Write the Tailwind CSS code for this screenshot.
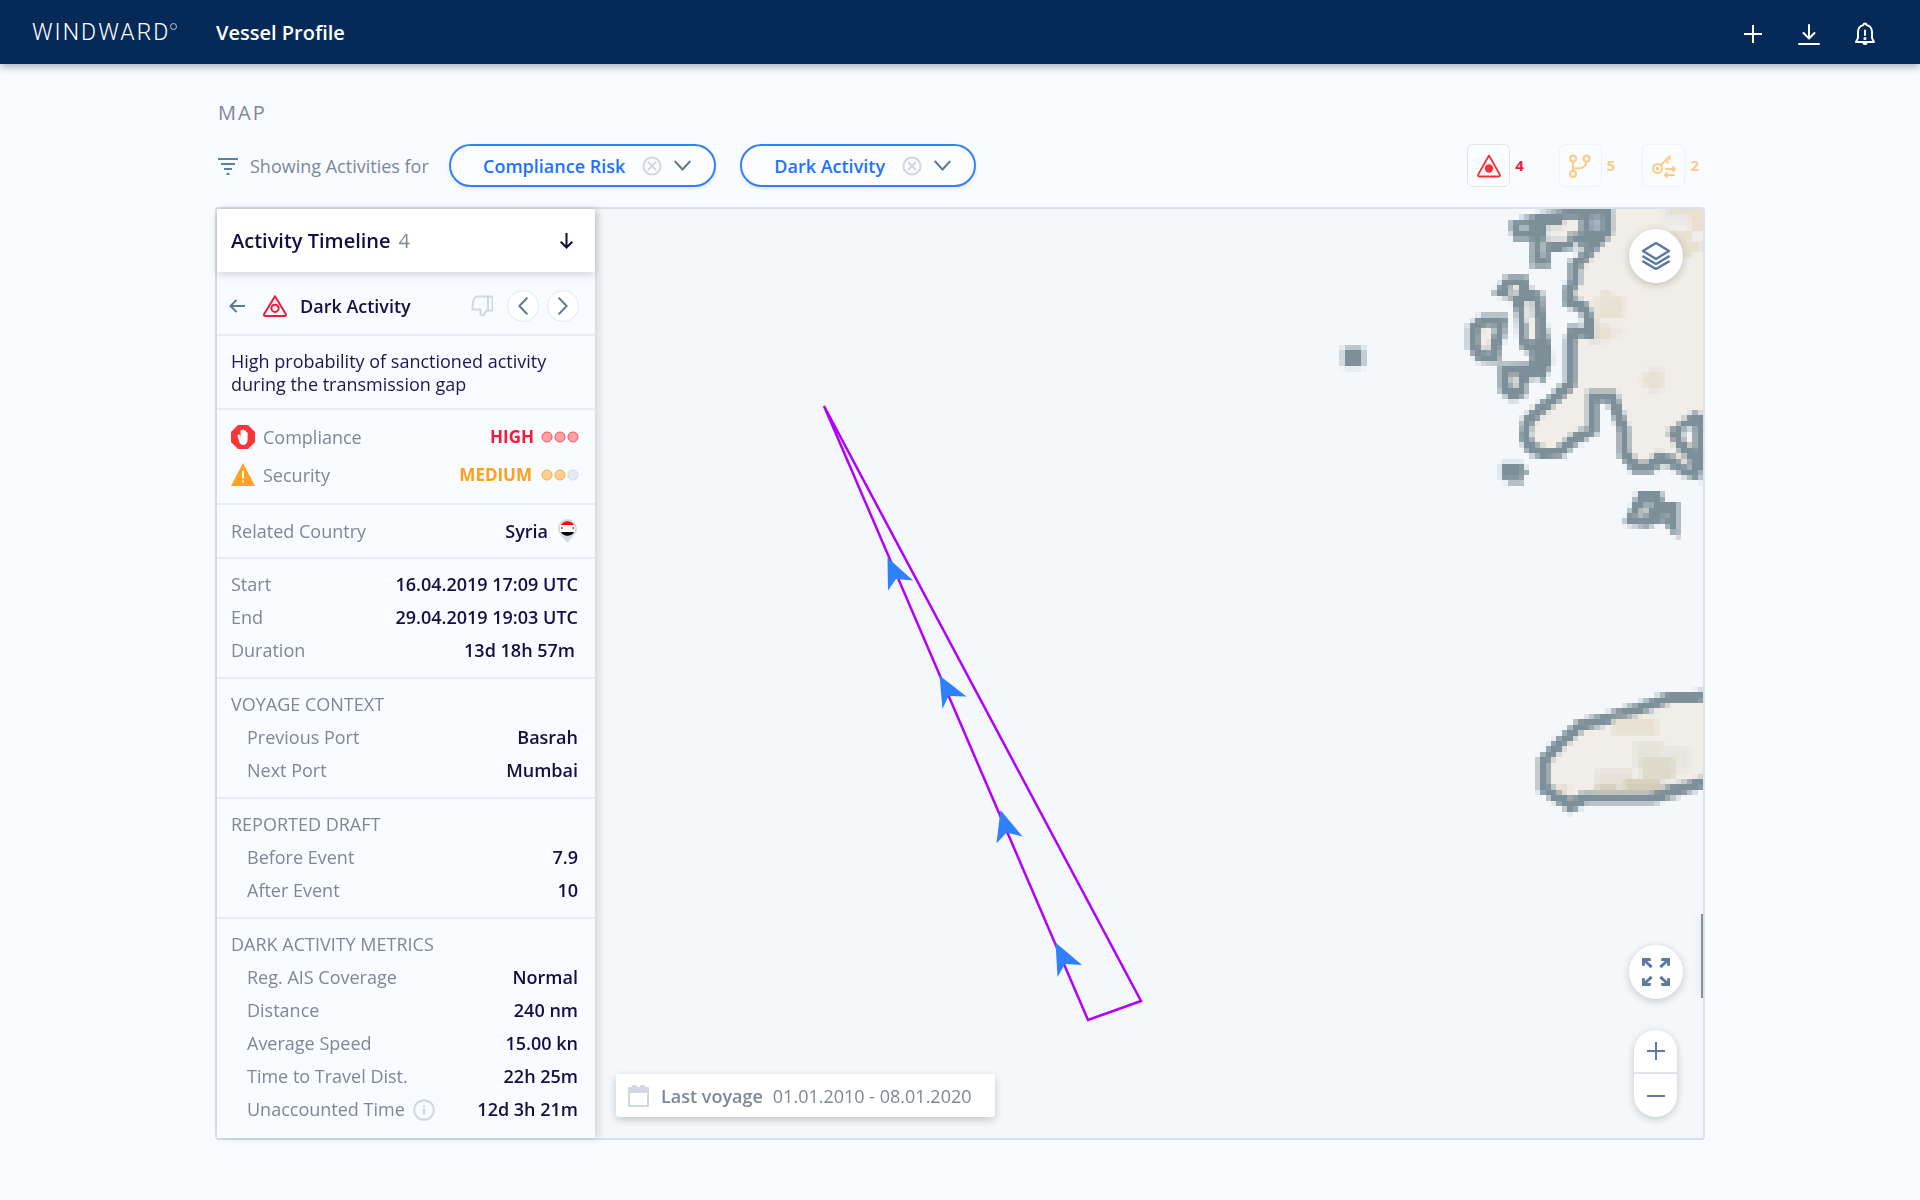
<!DOCTYPE html>
<html lang="en">
<head>
<meta charset="utf-8">
<meta name="viewport" content="width=device-width, initial-scale=1">
<title>Vessel Profile</title>
<script src="https://cdn.jsdelivr.net/npm/@tailwindcss/browser@4"></script>
</head>
<body class="min-h-screen bg-[#f8fbff] font-['Open_Sans','Noto_Sans',sans-serif] text-lg text-[#7e8796]">

<header class="relative flex h-16 items-center bg-[#062a58] pr-[41px] pl-8 text-white shadow-[0_3px_8px_rgba(0,0,0,0.3)]">
  <a href="#" aria-label="Windward home" class="flex w-46 items-start font-['Roboto',sans-serif] text-[23px] leading-none font-light tracking-[2px]">WINDWARD<span class="mt-[2px] size-[7px] rounded-full border border-white/70"></span></a>
  <h1 class="pt-[2px] text-xl font-semibold">Vessel Profile</h1>
  <div class="ml-auto flex items-center gap-7 pt-1">
    <button type="button" aria-label="Add" class="grid size-7 place-items-center">
      <svg class="size-5" viewBox="0 0 20 20" fill="none" stroke="currentColor" stroke-width="2"><path d="M10 1v18M1 10h18"/></svg>
    </button>
    <button type="button" aria-label="Download" class="grid size-7 place-items-center">
      <svg class="size-6" viewBox="0 0 24 24" fill="none" stroke="currentColor" stroke-width="2" stroke-linecap="round" stroke-linejoin="round"><path d="M12 3v13M6.500 11l5.500 5.500 5.500-5.500M2 22h20"/></svg>
    </button>
    <button type="button" aria-label="Alerts" class="grid size-7 place-items-center">
      <svg class="size-6" viewBox="0 0 24 24" fill="none" stroke="currentColor" stroke-width="2" stroke-linejoin="round" stroke-linecap="round"><path d="M12 1.500c-1 0-1.500.8-1.700 1.600C7 4 5 6.500 5 10v5.500c0 1.500-1.500 2.500-2 4.500h18c-.5-2-2-3-2-4.500V10c0-3.500-2-6-5.300-6.900-.2-.8-.7-1.600-1.700-1.600zM10.500 21.500c.5.800 2.500.8 3 0M12 8.500v4.500"/><circle cx="12" cy="16.500" r=".6" fill="currentColor"/></svg>
    </button>
  </div>
</header>

<main class="px-[215px] pt-9 pb-15">
  <h2 class="pl-[3px] text-xl leading-[26px] font-medium tracking-[2px]">MAP</h2>

  <div class="mt-[18px] flex items-center">
    <svg class="ml-[3px] h-5 w-5" viewBox="0 0 20 20" fill="none" stroke="#5d7da3" stroke-width="2"><path d="M0 3h20M3 8h14M6 13h8M8.500 18h3"/></svg>
    <span class="ml-3 w-[199px]">Showing Activities for</span>
    <div class="flex gap-6">
      <button type="button" class="flex h-[43px] items-center rounded-full border-2 border-[#3380fc] bg-[#fbfdff] pr-[23px] pl-8 font-semibold text-[#1d73fb] shadow-[0_2px_4px_rgba(0,0,0,0.08)]">
        Compliance Risk
        <svg class="ml-[17px] size-5" viewBox="0 0 20 20" fill="none" stroke="#cfd8e0" stroke-width="2"><circle cx="10" cy="10" r="8.500"/><path d="M6 6l8 8M14 6l-8 8"/></svg>
        <svg class="ml-3 size-[17px]" viewBox="0 0 17 17" fill="none" stroke="#5b7a98" stroke-width="2"><path d="M.7 4l7.800 8.500L16.300 4"/></svg>
      </button>
      <button type="button" class="flex h-[43px] items-center rounded-full border-2 border-[#3380fc] bg-[#fbfdff] pr-[23px] pl-8 font-semibold text-[#1d73fb] shadow-[0_2px_4px_rgba(0,0,0,0.08)]">
        Dark Activity
        <svg class="ml-[17px] size-5" viewBox="0 0 20 20" fill="none" stroke="#cfd8e0" stroke-width="2"><circle cx="10" cy="10" r="8.500"/><path d="M6 6l8 8M14 6l-8 8"/></svg>
        <svg class="ml-3 size-[17px]" viewBox="0 0 17 17" fill="none" stroke="#5b7a98" stroke-width="2"><path d="M.7 4l7.800 8.500L16.300 4"/></svg>
      </button>
    </div>
    <div class="ml-auto flex items-center gap-[27px] pr-[6px] text-[15px] font-bold">
      <div class="mr-2 flex items-center gap-[5px] text-[#f5193c]">
        <button type="button" aria-label="Dark activity" class="grid size-[43px] place-items-center rounded-md border border-[#dfe4ef] bg-[#fbfdff]">
          <svg class="size-6" viewBox="0 0 24 24"><path d="M12 1.500 1.200 20.500c-.5 1.300 0 2 1.300 2h19c1.300 0 1.800-.7 1.300-2z" fill="none" stroke="#fb3036" stroke-width="1.800" stroke-linejoin="round"/><circle cx="12" cy="14.500" r="4.200" fill="#fb3036"/></svg>
        </button>
        <span>4</span>
      </div>
      <div class="flex items-center gap-[5px] text-[#fccb85]">
        <button type="button" aria-label="Course deviation" class="grid size-[43px] place-items-center rounded-md border border-[#f0f2f8] bg-[#fafcff]">
          <svg class="size-6" viewBox="0 0 24 24" fill="none" stroke="currentColor" stroke-width="2"><circle cx="5" cy="4.500" r="3"/><circle cx="18.500" cy="4.500" r="3"/><circle cx="5" cy="20" r="3"/><path d="M5 7.500V17M5 14.500h5c5 0 8-2.500 8.300-7"/></svg>
        </button>
        <span>5</span>
      </div>
      <div class="flex items-center gap-[5px] text-[#fccb85]">
        <button type="button" aria-label="Identity change" class="grid size-[43px] place-items-center rounded-md border border-[#f0f2f8] bg-[#fafcff]">
          <svg class="size-6" viewBox="0 0 24 24" fill="none" stroke="currentColor" stroke-width="2"><circle cx="5.500" cy="14.500" r="4.500"/><circle cx="5.500" cy="14.500" r=".8" fill="currentColor"/><path d="M8.700 11.300 18 2M13 5.500l3.500 3.500M16 3l2.500 2.500M13 15h10M20.500 12.500l2.500 2.500-2.500 2.500M22.500 21H13M15.500 18.500 13 21l2.500 2.500"/></svg>
        </button>
        <span>2</span>
      </div>
    </div>
  </div>

  <section class="mt-5 flex rounded border-2 border-[#d9e1e9] bg-[#f4f8fb]">
    <aside class="z-10 w-[378px] shrink-0 bg-[#f8fbff] shadow-[3px_0_8px_rgba(0,0,0,0.15)]">
      <div class="relative flex h-[63px] items-center bg-white pr-[22px] pl-[14px] text-xl shadow-[0_3px_8px_rgba(0,0,0,0.15)]">
        <h3 class="font-semibold text-[#110f43]">Activity Timeline</h3>
        <span class="ml-2 font-medium">4</span>
        <button type="button" aria-label="Sort" class="ml-auto">
          <svg class="h-4 w-[13px]" viewBox="0 0 13 16" fill="none" stroke="#110f43" stroke-width="2"><path d="M6.500 0v14.500M.7 8.700l5.800 5.800 5.800-5.800"/></svg>
        </button>
      </div>

      <div class="flex h-16 items-center border-b-2 border-[#e8edf2] pt-1.5 pr-4 pl-3">
        <button type="button" aria-label="Back">
          <svg class="h-3.5 w-4" viewBox="0 0 16 14" fill="none" stroke="#5b7a98" stroke-width="2"><path d="M16 7H1.500M7.500 1l-6 6 6 6"/></svg>
        </button>
        <svg class="ml-[18px] h-[22px] w-6" viewBox="0 0 24 22" fill="none" stroke="#f5193c" stroke-width="2" stroke-linejoin="round"><path d="M12 1.200 1.200 19c-.4 1.200 0 2 1.200 2h19.200c1.200 0 1.600-.8 1.200-2z"/><circle cx="12" cy="13.300" r="3.600"/></svg>
        <h4 class="ml-[13px] font-semibold text-[#110f43]">Dark Activity</h4>
        <button type="button" aria-label="Dismiss" class="ml-auto">
          <svg class="h-[22px] w-[22px]" viewBox="0 0 22 22" fill="none" stroke="#d0d9e2" stroke-width="2"><path d="M17 15.500V1.500H5.500C3 3 1.500 7.500 1.500 11.500v3h8v5.500l3 .5 3-5h6V1.500H17"/></svg>
        </button>
        <button type="button" aria-label="Previous" class="ml-[14px] grid size-8 place-items-center rounded-full border border-[#e3e8f1] bg-white">
          <svg class="h-[18px] w-2.5" viewBox="0 0 10 18" fill="none" stroke="#5b7a98" stroke-width="2"><path d="M9.300.7 1.300 9l8 8.300"/></svg>
        </button>
        <button type="button" aria-label="Next" class="ml-2 grid size-8 place-items-center rounded-full border border-[#e3e8f1] bg-white">
          <svg class="h-[18px] w-2.5" viewBox="0 0 10 18" fill="none" stroke="#5b7a98" stroke-width="2"><path d="m.7.700 8 8.300-8 8.300"/></svg>
        </button>
      </div>

      <p class="border-b-2 border-[#e8edf2] pt-[14px] pr-4 pb-3 pl-[14px] leading-[23px] text-[#1b1850]">High probability of sanctioned activity during the transmission gap</p>

      <div class="border-b-2 border-[#e8edf2] pt-2 pr-4 pb-[9px] pl-[14px]">
        <div class="flex h-[38px] items-center">
          <svg class="size-6" viewBox="0 0 24 24"><path d="M7 0h10l7 7v10l-7 7H7l-7-7V7z" fill="#fb3538"/><path d="M7.700 9.500c.8-.2 1.200.2 1.400.8l.5 2V6c0-1.300 1.600-1.300 1.700 0V5c.1-1.300 1.700-1.300 1.800 0v1c.2-1.200 1.700-1.100 1.800.1v1.500c.3-1 1.600-.9 1.700.3V14c0 3.500-1.500 6-4.300 6-2.500 0-3.500-1.300-4-3.200L6.500 10.800c-.2-.7.500-1.200 1.200-1.300z" fill="#fff"/></svg>
          <span class="ml-2">Compliance</span>
          <strong class="ml-auto text-[17px] text-[#f5193c]">HIGH</strong>
          <svg class="ml-[7px] h-3 w-[38px]" viewBox="0 0 38 12" fill="#ffa3a8" stroke="#fb5055"><circle cx="6" cy="6" r="5"/><circle cx="19" cy="6" r="5"/><circle cx="32" cy="6" r="5"/></svg>
        </div>
        <div class="flex h-[38px] items-center">
          <svg class="size-6" viewBox="0 0 24 24"><path d="M12 0 24 23H0z" fill="#fea21f"/><path d="M12 8v7.500M12 17.500v2" stroke="#fff" stroke-width="2"/></svg>
          <span class="ml-2">Security</span>
          <strong class="ml-auto text-[17px] text-[#fea01c]">MEDIUM</strong>
          <svg class="ml-[9px] h-3 w-[38px]" viewBox="0 0 38 12" fill="#fecf90" stroke="#f3ab48"><circle cx="6" cy="6" r="5"/><circle cx="19" cy="6" r="5"/><circle cx="32" cy="6" r="5" fill="#e6eaf3" stroke="#d2d9e3"/></svg>
        </div>
      </div>

      <div class="flex h-[54px] items-center border-b-2 border-[#e8edf2] pr-[18px] pl-[14px]">
        <span>Related Country</span>
        <span class="ml-auto font-semibold text-[#110f43]">Syria</span>
        <svg class="ml-2.5 h-6 w-[19px]" viewBox="0 0 19 24"><path d="M9.500 0a9.500 9.500 0 0 0-9.500 9.500C0 15 5 18 9.500 24 14 18 19 15 19 9.500A9.500 9.500 0 0 0 9.500 0z" fill="#d3dbe4"/><path d="M3 6a7.500 7.500 0 0 1 13 0z" fill="#fb0d0d"/><path d="M2 6h15v7H2z" fill="#fff"/><path d="M3 13h13a7.500 7.500 0 0 1-13 0z" fill="#000"/><path d="M3 8h1.500v2H3zM14.500 8H16v2h-1.500z" fill="#22a022"/></svg>
      </div>

      <dl class="border-b-2 border-[#e8edf2] pt-[9px] pr-[17px] pb-2.5 pl-[14px] leading-[33px]">
        <div class="flex justify-between"><dt>Start</dt><dd class="font-semibold text-[#110f43]">16.04.2019 17:09 UTC</dd></div>
        <div class="flex justify-between"><dt>End</dt><dd class="font-semibold text-[#110f43]">29.04.2019 19:03 UTC</dd></div>
        <div class="flex justify-between"><dt>Duration</dt><dd class="pr-[3px] font-semibold text-[#110f43]">13d 18h 57m</dd></div>
      </dl>

      <div class="border-b-2 border-[#e8edf2] pt-[9px] pr-[17px] pb-2.5 pl-[14px] leading-[33px]">
        <h4 class="font-medium">VOYAGE CONTEXT</h4>
        <dl class="pl-4">
          <div class="flex justify-between"><dt>Previous Port</dt><dd class="font-semibold text-[#110f43]">Basrah</dd></div>
          <div class="flex justify-between"><dt>Next Port</dt><dd class="font-semibold text-[#110f43]">Mumbai</dd></div>
        </dl>
      </div>

      <div class="border-b-2 border-[#e8edf2] pt-[9px] pr-[17px] pb-2.5 pl-[14px] leading-[33px]">
        <h4 class="font-medium">REPORTED DRAFT</h4>
        <dl class="pl-4">
          <div class="flex justify-between"><dt>Before Event</dt><dd class="font-semibold text-[#110f43]">7.9</dd></div>
          <div class="flex justify-between"><dt>After Event</dt><dd class="font-semibold text-[#110f43]">10</dd></div>
        </dl>
      </div>

      <div class="pt-[9px] pr-[17px] pb-3 pl-[14px] leading-[33px]">
        <h4 class="font-medium">DARK ACTIVITY METRICS</h4>
        <dl class="pl-4">
          <div class="flex justify-between"><dt>Reg. AIS Coverage</dt><dd class="font-semibold text-[#110f43]">Normal</dd></div>
          <div class="flex justify-between"><dt>Distance</dt><dd class="font-semibold text-[#110f43]">240 nm</dd></div>
          <div class="flex justify-between"><dt>Average Speed</dt><dd class="font-semibold text-[#110f43]">15.00 kn</dd></div>
          <div class="flex justify-between"><dt>Time to Travel Dist.</dt><dd class="font-semibold text-[#110f43]">22h 25m</dd></div>
          <div class="flex justify-between"><dt class="flex items-center">Unaccounted Time
            <svg class="ml-2 size-[22px]" viewBox="0 0 22 22" fill="none" stroke="#cfd8e0" stroke-width="2"><circle cx="11" cy="11" r="9.800"/><path d="M11 9.500V16M11 6v2"/></svg></dt><dd class="font-semibold text-[#110f43]">12d 3h 21m</dd></div>
        </dl>
      </div>
    </aside>

    <div class="relative flex-1 overflow-hidden">
      <canvas id="land" width="68" height="112" class="absolute top-0 right-0 h-[608px] w-[369px] [image-rendering:pixelated]"></canvas>

      <svg class="absolute inset-0 size-full" aria-label="Vessel route">
        <path d="M229 197 493 811l53-19z" fill="none" stroke="#b400fb" stroke-width="2.500"/>
        <g fill="#2f80ff">
          <path d="m292.500 348.500 25.500 23-17-1.500-8 11.500z"/>
          <path d="m344.500 466.500 27 21-18-.5-6 13z"/>
          <path d="m405.500 601 22 26.500-16-4-10 11z"/>
          <path d="m460.500 733.500 26.500 22.500-17-1-7.500 13z"/>
        </g>
      </svg>

      <button type="button" aria-label="Layers" class="absolute top-5 right-5 grid size-[54px] place-items-center rounded-full bg-white shadow-[0_2px_8px_rgba(0,0,0,0.2)]">
        <svg class="size-7" viewBox="0 0 28 28" fill="none" stroke="#5b7a9e" stroke-width="2.500" stroke-linejoin="round"><path d="M14 1 27 9 14 17 1 9zM.5 14l13.500 8 13.500-8M.5 19l13.500 8 13.500-8"/></svg>
      </button>

      <div class="absolute right-0 bottom-[140px] h-[84px] w-[2px] bg-[#8a8f94] shadow-[0_0_10px_rgba(0,0,0,0.2)]"></div>

      <button type="button" aria-label="Full screen" class="absolute right-5 bottom-[139px] grid size-[54px] place-items-center rounded-full bg-white shadow-[0_2px_8px_rgba(0,0,0,0.2)]">
        <svg class="size-7" viewBox="0 0 29 29" fill="none" stroke="#5b7a9e" stroke-width="3"><path d="M1.500 8V1.500H9M1.500 1.500 10 9.500M20 1.500h7.500V8M27.500 1.500 19 9.500M1.500 21v6.500H9M1.500 27.500l8.500-8M27.500 21v6.500H20M27.500 27.500 19 19.500"/></svg>
      </button>

      <div class="absolute right-[26px] bottom-[21px] flex w-[43px] flex-col divide-y-2 divide-[#e1e4ea] rounded-full bg-white text-[#5b7a9e] shadow-[0_2px_8px_rgba(0,0,0,0.2)]">
        <button type="button" aria-label="Zoom in" class="grid h-11 place-items-center"><svg class="size-[18px]" viewBox="0 0 18 18" fill="none" stroke="currentColor" stroke-width="2"><path d="M9 0v18M0 9h18"/></svg></button>
        <button type="button" aria-label="Zoom out" class="grid h-[43px] place-items-center"><svg class="size-[18px]" viewBox="0 0 18 18" fill="none" stroke="currentColor" stroke-width="2"><path d="M0 9h18"/></svg></button>
      </div>

      <button type="button" class="absolute bottom-[21px] left-[21px] flex h-[43px] w-[379px] items-center rounded-[3px] bg-white pl-3 shadow-[0_3px_8px_rgba(0,0,0,0.2)]">
        <svg class="h-[22px] w-[21px]" viewBox="0 0 21 22"><path d="M1 2h3V1q0-1 1-1h3q1 0 1 1v1h3V1q0-1 1-1h3q1 0 1 1v1h3q1 0 1 1v18q0 1-1 1H1q-1 0-1-1V3q0-1 1-1zm1 6v12h17V8z" fill="#d0d9e2" fill-rule="evenodd"/></svg>
        <span class="ml-3 font-semibold">Last voyage</span>
        <span class="ml-2.5">01.01.2010 - 08.01.2020</span>
      </button>
    </div>
  </section>
</main>

<script>
  // Coastline tile: drawn at low resolution and scaled up by the stylesheet.
  const ctx = document.getElementById('land').getContext('2d');
  const COAST = '#7d8f98', LAND = '#f1eee9', SEA = '#f4f8fb';
  ctx.scale(68 / 1107, 112 / 1824);
  ctx.translate(317, -27);
  ctx.lineJoin = 'miter';

  function shape(points, fill, stroke, width) {
    ctx.beginPath();
    points.forEach(([x, y], i) => i ? ctx.lineTo(x, y) : ctx.moveTo(x, y));
    ctx.closePath();
    if (fill) { ctx.fillStyle = fill; ctx.fill(); }
    if (stroke) { ctx.strokeStyle = stroke; ctx.lineWidth = width || 35; ctx.stroke(); }
  }
  function block(x, y, w, h, color) { ctx.fillStyle = color; ctx.fillRect(x, y, w, h); }

  // mainland
  shape([[900, -40], [500, -40], [502, 95], [470, 130], [440, 165], [405, 195], [405, 245], [388, 270], [388, 305], [435, 325],
    [450, 365], [452, 402], [402, 392], [394, 420], [394, 550], [350, 590], [300, 630], [262, 668], [255, 710],
    [275, 745], [310, 760], [360, 756], [410, 715], [460, 688], [460, 590], [517, 590], [533, 640], [553, 690], [553, 760],
    [590, 803], [630, 803], [660, 775], [700, 785], [740, 815], [765, 822], [768, 780], [900, 780]], LAND, COAST);
  block(470, 290, 82, 65, '#e8e2d5'); block(486, 272, 32, 18, '#e8e2d5');
  block(470, 375, 50, 48, '#e8e2d5'); block(520, 390, 32, 18, '#eae5da');
  block(605, 524, 64, 32, '#e8e2d5'); block(620, 508, 49, 64, '#e8e2d5'); block(636, 572, 16, 16, '#ebe6dc');
  block(670, 27, 120, 40, '#e9e7e4'); block(690, 27, 100, 14, '#e8dfcd'); block(752, 27, 38, 65, '#e9e0cf');
  block(690, 92, 66, 80, '#e8e1d2'); block(736, 125, 50, 33, '#e8e1d2');
  // inlet on the east coast
  shape([[765, 655], [705, 700], [735, 750], [780, 790], [780, 660]], LAND, COAST);
  block(735, 680, 16, 45, SEA); block(720, 770, 16, 16, LAND); block(736, 790, 16, 16, '#b9c1c3');

  // northern archipelago
  shape([[222, 75], [290, 58], [380, 42], [500, 42], [500, 90], [440, 125], [400, 145], [320, 145], [320, 190], [287, 190],
    [287, 108], [232, 108]], COAST, COAST, 26);
  block(320, 78, 66, 44, LAND); block(370, 58, 50, 40, LAND);
  block(236, 74, 34, 16, '#aebbbf'); block(303, 120, 17, 50, '#aebbbf'); block(453, 50, 33, 40, '#a4b4c0');
  block(372, 150, 46, 18, SEA); block(400, 130, 18, 20, SEA);
  shape([[205, 240], [255, 240], [260, 275], [300, 290], [308, 380], [322, 430], [325, 490], [305, 530], [282, 505],
    [285, 455], [250, 435], [242, 345], [225, 290], [178, 278]], COAST, COAST, 24);
  block(255, 305, 26, 60, LAND); block(263, 350, 24, 70, LAND); block(204, 258, 33, 30, '#b9c1c3'); block(220, 258, 16, 16, LAND);
  shape([[130, 362], [185, 362], [180, 400], [170, 430], [165, 472], [125, 470], [102, 440], [102, 385]], LAND, COAST);
  shape([[190, 505], [300, 500], [285, 515], [252, 540], [250, 575], [220, 590], [190, 565]], COAST, COAST, 26);
  block(204, 524, 32, 34, '#b9c1c3'); block(220, 540, 16, 16, LAND);

  // small islets
  block(-289, 443, 60, 58, COAST);
  block(185, 790, 66, 50, COAST); block(202, 840, 50, 15, '#aab6bb'); block(251, 806, 17, 18, '#94a3aa');
  shape([[605, 885], [655, 885], [665, 918], [705, 918], [705, 985], [670, 950], [620, 970], [570, 962]], COAST, COAST, 26);
  block(604, 922, 16, 20, LAND); block(620, 905, 14, 18, '#c5cccd'); block(588, 942, 30, 14, '#b9c1c3'); block(670, 942, 16, 16, '#a4b1b6');

  // southern island
  shape([[900, 1478], [770, 1490], [690, 1493], [600, 1525], [510, 1553], [420, 1578], [360, 1630], [312, 1682], [312, 1765], [395, 1817],
    [430, 1794], [640, 1791], [720, 1768], [900, 1710]], LAND, COAST);
  block(520, 1555, 132, 50, '#e8e1d2'); block(585, 1625, 85, 80, '#e5e3da'); block(670, 1640, 80, 75, '#e8e6df');
  block(604, 1674, 100, 66, '#dddacb'); block(470, 1710, 110, 60, '#e5e1d8'); block(555, 1740, 110, 32, '#d3ccb8');
  block(470, 1757, 65, 15, '#d6cdb8'); block(355, 1757, 32, 20, '#e3dac9');
</script>
</body>
</html>
